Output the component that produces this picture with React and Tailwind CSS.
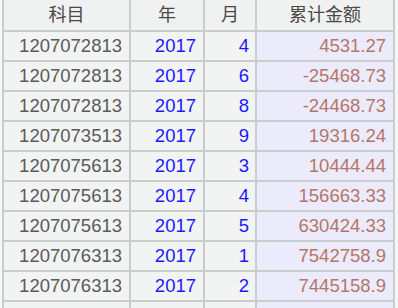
import React from "react";

const rows = [
  ["1207072813", "2017", "4", "4531.27"],
  ["1207072813", "2017", "6", "-25468.73"],
  ["1207072813", "2017", "8", "-24468.73"],
  ["1207073513", "2017", "9", "19316.24"],
  ["1207075613", "2017", "3", "10444.44"],
  ["1207075613", "2017", "4", "156663.33"],
  ["1207075613", "2017", "5", "630424.33"],
  ["1207076313", "2017", "1", "7542758.9"],
  ["1207076313", "2017", "2", "7445158.9"],
  ["", "", "", ""],
];

const font = { fontFamily: '"Liberation Sans", Arial, "Noto Sans CJK SC", sans-serif' };

export default function App() {
  return (
    <div className="w-[398px] h-[308px] overflow-hidden bg-[#f6f7f7] pl-[2px]" style={font}>
      <div className="w-[393px] border-l-2 border-[#c8cece]">
        {/* Header */}
        <div className="flex h-[32px] bg-[#f0f1f1] text-[18px] text-[#484848] border-b-2 border-[#c8cece]">
          <div className="w-[127px] flex items-center justify-center border-r-2 border-[#c8cece]">科目</div>
          <div className="w-[74px] flex items-center justify-center border-r-2 border-[#c8cece]">年</div>
          <div className="w-[52px] flex items-center justify-center border-r-2 border-[#c8cece]">月</div>
          <div className="w-[138px] flex items-center justify-center border-r-2 border-[#c8cece]">累计金额</div>
        </div>

        {/* Rows */}
        {rows.map((r, i) => (
          <div key={i} className="flex h-[30px] text-[18.5px] border-b-2 border-[#c8cece]">
            <div className="w-[127px] flex items-center justify-end pr-[7px] bg-[#f2f3f3] text-[#5a5a5a] border-r-2 border-[#c8cece]">
              {r[0]}
            </div>
            <div className="w-[74px] flex items-center justify-end pr-[7px] bg-[#f2f3f3] text-[#1a1aff] border-r-2 border-[#c8cece]">
              {r[1]}
            </div>
            <div className="w-[52px] flex items-center justify-end pr-[6px] bg-[#f2f3f3] text-[#1a1aff] border-r-2 border-[#c8cece]">
              {r[2]}
            </div>
            <div className="w-[138px] flex items-center justify-end pr-[7px] bg-[#ebebfb] text-[#b5766a] border-r-2 border-[#c8cece]">
              {r[3]}
            </div>
          </div>
        ))}
      </div>
    </div>
  );
}
